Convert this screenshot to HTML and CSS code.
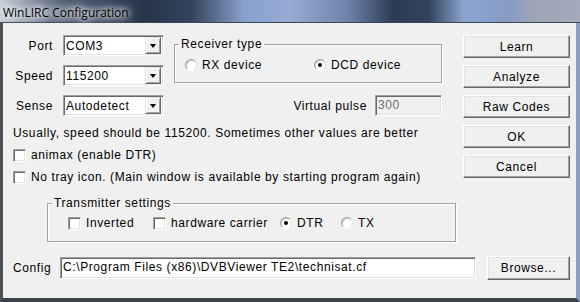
FILE: index.html
```html
<!DOCTYPE html>
<html>
<head>
<meta charset="UTF-8">
<title>WinLIRC Configuration</title>
<link rel="stylesheet" href="styles.css">
</head>
<body>
	<div class="window">
		<div class="titlebar"><span class="title">WinLIRC Configuration</span></div>
		<div class="client">
			<div class="top">
				<div class="main">
					<div class="settings">
						<label class="fieldLabel">Port</label>
						<div class="combo"><span class="comboText">COM3</span><span class="comboArrow"></span></div>
						<fieldset class="group receiver">
							<legend>Receiver type</legend>
							<div class="groupRow">
								<span class="option optRx"><span class="radio"></span>RX device</span>
								<span class="option"><span class="radio checked"></span>DCD device</span>
							</div>
						</fieldset>
						<label class="fieldLabel">Speed</label>
						<div class="combo"><span class="comboText">115200</span><span class="comboArrow"></span></div>
						<label class="fieldLabel">Sense</label>
						<div class="combo"><span class="comboText">Autodetect</span><span class="comboArrow"></span></div>
						<div class="pulse">
							<span>Virtual pulse</span>
							<div class="edit disabled">300</div>
						</div>
					</div>
					<div class="line">Usually, speed should be 115200. Sometimes other values are better</div>
					<div class="line"><span class="checkbox"></span>animax (enable DTR)</div>
					<div class="line"><span class="checkbox"></span>No tray icon. (Main window is available by starting program again)</div>
					<fieldset class="group transmitter">
						<legend>Transmitter settings</legend>
						<div class="groupRow">
							<span class="option optInverted"><span class="checkbox"></span>Inverted</span>
							<span class="option optCarrier"><span class="checkbox"></span>hardware carrier</span>
							<span class="option optDtr"><span class="radio checked"></span>DTR</span>
							<span class="option"><span class="radio"></span>TX</span>
						</div>
					</fieldset>
				</div>
				<div class="buttons">
					<button>Learn</button>
					<button>Analyze</button>
					<button>Raw Codes</button>
					<button>OK</button>
					<button>Cancel</button>
				</div>
			</div>
			<div class="config">
				<label class="configLabel">Config</label>
				<div class="edit path">C:\Program Files (x86)\DVBViewer TE2\technisat.cf</div>
				<button class="browse">Browse...</button>
			</div>
		</div>
	</div>
</body>
</html>
```

FILE: styles.css
```css
body {
	margin: 0;
	font-family: "Liberation Sans", Arial, sans-serif;
	font-size: 12px;
	letter-spacing: 0.6px;
	color: #000;
	background: #6f7f99;
}

.window {
	width: 580px;
	height: 302px;
	display: flex;
	flex-direction: column;
	box-sizing: border-box;
	border-left: 3px solid #4a4f58;
	border-right: 4px solid #8d9fbf;
	border-bottom: 4px solid #3d4049;
}

.titlebar {
	height: 23px;
	margin: 0 -4px 0 -3px;
	box-sizing: border-box;
	border-bottom: 1px solid #3b4658;
	background: linear-gradient(90deg, #c9d0da 0%, #58677c 10%, #26354a 25%, #33435b 33%, #88a0cc 42%, #97acd4 50%, #6d83ab 60%, #2c3b52 68%, #33445f 74%, #8ca4d0 80%, #869cc4 88%, #9ea6b6 92%, #a2aabb 100%);
}

.title {
	display: inline-block;
	padding: 4px 0 0 3px;
	font-family: "Open Sans", "Liberation Sans", sans-serif;
	font-size: 12px;
	letter-spacing: 0;
	color: #000;
	text-shadow: 0 0 6px #fff, 0 0 8px #fff, 0 0 10px #e8ecf2;
}

.client {
	flex: 1;
	background: #f0f0f0;
	padding: 12px 6px 0 10px;
}

.top {
	display: flex;
}

.main {
	flex: 1;
}

.settings {
	display: grid;
	grid-template-columns: 40px 101px 1fr;
	grid-template-rows: 21px 21px 21px;
	row-gap: 9px;
	column-gap: 10px;
	width: 429px;
}

.fieldLabel {
	grid-column: 1;
	text-align: right;
	align-self: center;
}

.combo {
	grid-column: 2;
	display: flex;
	align-items: center;
	box-sizing: border-box;
	height: 21px;
	background: #fff;
	border: 1px solid;
	border-color: #a0a0a0 #fff #fff #a0a0a0;
	box-shadow: inset 1px 1px 0 #696969, inset -1px -1px 0 #e3e3e3;
	padding: 0 2px 0 2px;
}

.comboText {
	flex: 1;
}

.comboArrow {
	position: relative;
	width: 16px;
	height: 17px;
	box-sizing: border-box;
	background: #f0f0f0;
	border: 1px solid;
	border-color: #e3e3e3 #696969 #696969 #e3e3e3;
	box-shadow: inset 1px 1px 0 #fff, inset -1px -1px 0 #a0a0a0;
}

.comboArrow::after {
	content: "";
	position: absolute;
	left: 4px;
	top: 6px;
	border-left: 3.5px solid transparent;
	border-right: 3.5px solid transparent;
	border-top: 4px solid #000;
}

.group {
	margin: 0;
	padding: 0;
	box-sizing: border-box;
	border: 1px solid #a0a0a0;
	box-shadow: 1px 1px 0 #fff, inset 1px 1px 0 #fff;
}

.group legend {
	margin-left: 4px;
	padding: 0 2px;
	line-height: 14px;
}

.groupRow {
	display: flex;
	align-items: center;
	height: 14px;
	padding-top: 7px;
}

.receiver {
	grid-column: 3;
	grid-row: 1 / span 2;
	align-self: start;
	margin-top: 2px;
	height: 46px;
}

.receiver .groupRow {
	padding-left: 10px;
}

.optRx {
	width: 129px;
}

.option {
	display: flex;
	align-items: center;
}

.radio {
	display: inline-block;
	position: relative;
	width: 12px;
	height: 12px;
	box-sizing: border-box;
	border-radius: 50%;
	background: #fff;
	border: 1px solid;
	border-color: #a0a0a0 #e3e3e3 #fff #a0a0a0;
	box-shadow: inset 1px 1px 0 #c8c8c8;
	margin-right: 5px;
}

.radio.checked::after {
	content: "";
	position: absolute;
	left: 3px;
	top: 3px;
	width: 4px;
	height: 4px;
	border-radius: 50%;
	background: #000;
}

.checkbox {
	display: inline-block;
	width: 13px;
	height: 13px;
	box-sizing: border-box;
	background: #fff;
	border: 1px solid;
	border-color: #a0a0a0 #fff #fff #a0a0a0;
	box-shadow: inset 1px 1px 0 #696969, inset -1px -1px 0 #e3e3e3;
	margin-right: 5px;
}

.pulse {
	grid-column: 3;
	grid-row: 3;
	display: flex;
	align-items: center;
	justify-content: flex-end;
	gap: 8px;
}

.edit {
	height: 21px;
	box-sizing: border-box;
	background: #fff;
	border: 1px solid;
	border-color: #a0a0a0 #fff #fff #a0a0a0;
	box-shadow: inset 1px 1px 0 #696969, inset -1px -1px 0 #e3e3e3;
	padding: 0 2px;
	line-height: 19px;
}

.edit.disabled {
	width: 67px;
	background: #f0f0f0;
	color: #6d6d6d;
}

.line {
	display: flex;
	align-items: center;
	height: 22px;
}

.settings + .line {
	margin-top: 6px;
}

.transmitter {
	margin: 8px 0 0 34px;
	width: 409px;
	height: 46px;
}

.transmitter .groupRow {
	padding-left: 20px;
	padding-top: 6px;
}

.optInverted {
	width: 85px;
}

.optCarrier {
	width: 127px;
}

.optDtr {
	width: 61px;
}

.buttons {
	display: flex;
	flex-direction: column;
	gap: 7px;
	width: 107px;
}

button {
	height: 23px;
	box-sizing: border-box;
	font-family: inherit;
	font-size: 12px;
	letter-spacing: inherit;
	color: #000;
	background: #f0f0f0;
	border: 1px solid;
	border-color: #fff #696969 #696969 #fff;
	box-shadow: inset -1px -1px 0 #a0a0a0, inset 1px 1px 0 #e3e3e3;
	padding: 0;
}

.config {
	display: flex;
	align-items: center;
	margin-top: 14px;
}

.configLabel {
	width: 47px;
}

.path {
	width: 416px;
	height: 22px;
}

.browse {
	width: 83px;
	height: 24px;
	margin-left: 11px;
}
```
